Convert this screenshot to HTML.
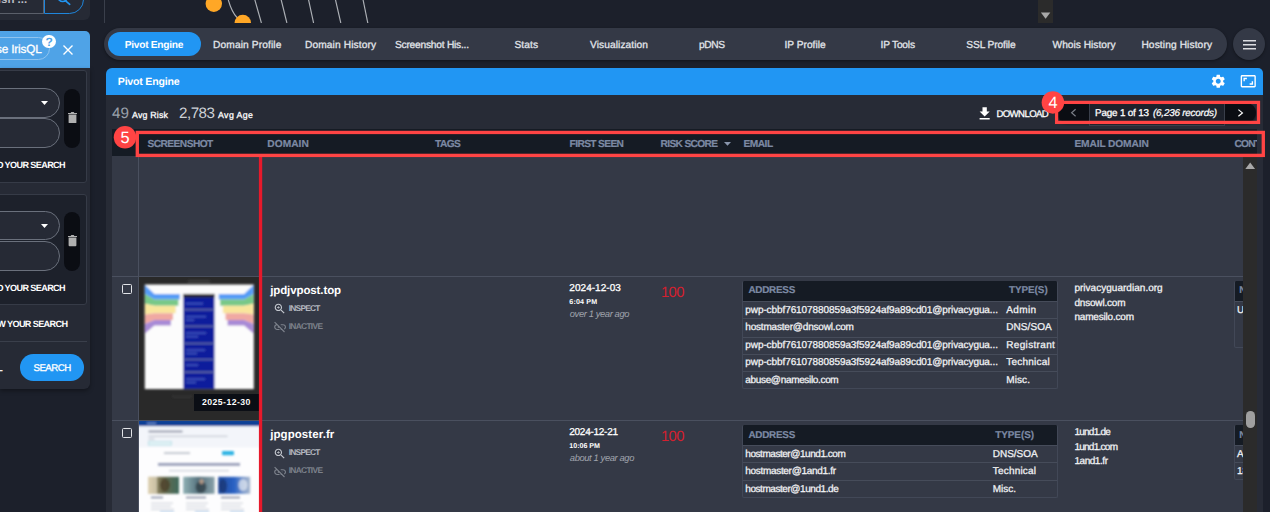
<!DOCTYPE html>
<html lang="en">
<head>
<meta charset="utf-8">
<title>Pivot Engine</title>
<style>
*{box-sizing:border-box;margin:0;padding:0}
html,body{width:1270px;height:512px;overflow:hidden;background:#1c202b}
body{position:relative;font-family:"Liberation Sans",sans-serif;text-rendering:geometricPrecision}
.a{position:absolute}
.t{position:absolute;white-space:pre;line-height:1;font-family:"Liberation Sans",sans-serif;z-index:5}
#texts{position:absolute;left:0;top:0;width:0;height:0}
.sep{position:absolute;height:1px;background:#4a505f}
.et{position:absolute;border:1px solid #424857;border-top:none;border-radius:2px;background:#343946;overflow:hidden}
.et .h{position:absolute;left:0;top:0;right:0;background:#151b24}
.et .r{position:absolute;left:0;right:0;height:1px;background:#464c5a}
</style>
</head>
<body>
<!-- ===== top-left sidebar piece ===== -->
<div class="a" style="left:0;top:0;width:89.8px;height:20px;background:#262a35;border-bottom-right-radius:6px;overflow:hidden">
  <div class="a" style="left:-10px;top:-15px;width:53.8px;height:28.6px;border:1px solid #5a5f6a"></div>
  <div class="a" style="left:44px;top:-15px;width:39.8px;height:28.8px;border:1px solid #1f86dc;border-radius:0 14.5px 14.5px 0"></div>
  <svg class="a" style="left:50px;top:0" width="30" height="10" viewBox="50 0 30 10"><circle cx="62.7" cy="-3.1" r="4.6" fill="none" stroke="#2196f3" stroke-width="1.7"/><path d="M65.9 1.2L69.7 4.3" stroke="#2196f3" stroke-width="1.7" stroke-linecap="round" fill="none"/></svg>
</div>
<div class="a" style="left:104px;top:0;width:1px;height:22.8px;background:#3a3f4b"></div>
<!-- graph remnants -->
<svg class="a" style="left:107px;top:0" width="940" height="23" viewBox="107 0 940 23">
  <g fill="none" stroke="#aeb1b7" stroke-width="1.15">
    <path d="M228 -1C230 6 232.5 13 237 17.5"/>
    <path d="M254.6 -1L261.4 23"/>
    <path d="M281 -1L286.9 23"/>
    <path d="M308.4 -1L313.6 23"/>
    <path d="M335.3 -1L340.8 23"/>
    <path d="M362.9 -1L367.8 23"/>
  </g>
  <circle cx="213.8" cy="3.8" r="8.2" fill="#ffa726"/>
  <circle cx="242.8" cy="23" r="8.3" fill="#ffa726"/>
</svg>
<div class="a" style="left:1038px;top:0;width:15px;height:22.8px;background:#2b2b2b"></div>
<svg class="a" style="left:1038px;top:0" width="15" height="23" viewBox="0 0 15 23"><path d="M2.9 12.4h9.4l-4.7 6.4z" fill="#a8a8a8"/></svg>

<!-- ===== sidebar ===== -->
<div class="a" style="left:0;top:31px;width:89.9px;height:37.2px;background:#4fa3e7;border-top-right-radius:5px"></div>
<div class="a" style="left:-20px;top:37.3px;width:70px;height:23px;border:1px solid #8fc4f0;border-radius:12px"></div>
<div class="a" style="left:41.9px;top:34.7px;width:13.8px;height:13.8px;border-radius:50%;background:#fff;z-index:4"></div>
<svg class="a" style="left:63.4px;top:44.5px" width="10" height="10" viewBox="0 0 10 10"><path d="M0.5 0.5L9.5 9.5M9.5 0.5L0.5 9.5" stroke="#fff" stroke-width="1.4" fill="none"/></svg>
<div class="a" style="left:0;top:68.1px;width:89.9px;height:321px;background:#262a35;border-bottom-right-radius:6px;box-shadow:0 2px 4px rgba(0,0,0,.35)"></div>
<div class="a" style="left:-5px;top:70px;width:92px;height:113px;background:#1d212b;border:1px solid #363b47;border-radius:3px"></div>
<div class="a" style="left:-5px;top:194px;width:92px;height:111px;background:#1d212b;border:1px solid #363b47;border-radius:3px"></div>
<!-- pills box 1 -->
<div class="a" style="left:-20px;top:88.2px;width:80.4px;height:29.4px;background:#262a35;border:1px solid #6a707c;border-radius:15px"></div>
<div class="a" style="left:-20px;top:118.2px;width:80.4px;height:29.4px;background:#262a35;border:1px solid #6a707c;border-radius:15px"></div>
<div class="a" style="left:64px;top:89px;width:16px;height:58.6px;background:#0b0d13;border-radius:8px"></div>
<svg class="a" style="left:40.8px;top:100.9px" width="7" height="4" viewBox="0 0 7 4"><path d="M0 0h7L3.5 4z" fill="#fff"/></svg>
<svg class="a" style="left:67.6px;top:111.8px" width="9" height="11.5" viewBox="0 0 9 11.5"><path d="M0.6 2.6h7.8v7.7a1 1 0 0 1-1 1H1.6a1 1 0 0 1-1-1zM0 0.9h2.6l.7-.9h2.4l.7.9H9v1.1H0z" fill="#b0b0b0"/></svg>
<!-- pills box 2 -->
<div class="a" style="left:-20px;top:211px;width:80.4px;height:29.4px;background:#262a35;border:1px solid #6a707c;border-radius:15px"></div>
<div class="a" style="left:-20px;top:241px;width:80.4px;height:29.6px;background:#262a35;border:1px solid #6a707c;border-radius:15px"></div>
<div class="a" style="left:64px;top:212px;width:16px;height:58.6px;background:#0b0d13;border-radius:8px"></div>
<svg class="a" style="left:40.8px;top:223.7px" width="7" height="4" viewBox="0 0 7 4"><path d="M0 0h7L3.5 4z" fill="#fff"/></svg>
<svg class="a" style="left:67.6px;top:235.2px" width="9" height="11.5" viewBox="0 0 9 11.5"><path d="M0.6 2.6h7.8v7.7a1 1 0 0 1-1 1H1.6a1 1 0 0 1-1-1zM0 0.9h2.6l.7-.9h2.4l.7.9H9v1.1H0z" fill="#b0b0b0"/></svg>
<div class="a" style="left:0;top:341.2px;width:86.6px;height:1px;background:#3a3f4b"></div>
<div class="a" style="left:19.8px;top:354.3px;width:64.3px;height:26.6px;background:#2196f3;border-radius:13.3px"></div>

<!-- ===== tab bar ===== -->
<div class="a" style="left:104px;top:28.2px;width:1123.2px;height:31.7px;background:#343946;border-radius:16px;box-shadow:0 1px 3px rgba(0,0,0,.4)"></div>
<div class="a" style="left:107.9px;top:32px;width:92.8px;height:24px;background:#2196f3;border-radius:12px"></div>
<div class="a" style="left:1232.7px;top:28.1px;width:32.1px;height:32.1px;background:#343946;border-radius:50%;box-shadow:0 1px 3px rgba(0,0,0,.4)"></div>
<svg class="a" style="left:1243px;top:40px" width="13.2" height="10" viewBox="0 0 13.2 10"><path d="M0 0.8h13.2M0 4.8h13.2M0 8.7h13.2" stroke="#dcdee2" stroke-width="1.5" fill="none"/></svg>

<!-- ===== main panel ===== -->
<div class="a" style="left:106px;top:67.8px;width:1157.2px;height:460px;background:#272b36;border-radius:6px 5px 0 0"></div>
<div class="a" style="left:106px;top:67.8px;width:1157.2px;height:27.2px;background:#2196f3;border-radius:6px 5px 0 0"></div>
<!-- gear -->
<svg class="a" style="left:1210.15px;top:73.1px" width="16.5" height="16.5" viewBox="0 0 24 24"><path fill="#fff" d="M19.14,12.94c0.04-0.3,0.06-0.61,0.06-0.94c0-0.32-0.02-0.64-0.07-0.94l2.03-1.58c0.18-0.14,0.23-0.41,0.12-0.61 l-1.92-3.32c-0.12-0.22-0.37-0.29-0.59-0.22l-2.39,0.96c-0.5-0.38-1.03-0.7-1.62-0.94L14.4,2.81c-0.04-0.24-0.24-0.41-0.48-0.41 h-3.84c-0.24,0-0.43,0.17-0.47,0.41L9.25,5.35C8.66,5.59,8.12,5.92,7.63,6.29L5.24,5.33c-0.22-0.08-0.47,0-0.59,0.22L2.74,8.87 C2.62,9.08,2.66,9.34,2.86,9.48l2.03,1.58C4.84,11.36,4.8,11.69,4.8,12s0.02,0.64,0.07,0.94l-2.03,1.58 c-0.18,0.14-0.23,0.41-0.12,0.61l1.92,3.32c0.12,0.22,0.37,0.29,0.59,0.22l2.39-0.96c0.5,0.38,1.03,0.7,1.62,0.94l0.36,2.54 c0.05,0.24,0.24,0.41,0.48,0.41h3.84c0.24,0,0.44-0.17,0.47-0.41l0.36-2.54c0.59-0.24,1.13-0.56,1.62-0.94l2.39,0.96 c0.22,0.08,0.47,0,0.59-0.22l1.92-3.32c0.12-0.22,0.07-0.47-0.12-0.61L19.14,12.94z M12,15.6c-1.98,0-3.6-1.62-3.6-3.6 s1.62-3.6,3.6-3.6s3.6,1.62,3.6,3.6S13.98,15.6,12,15.6z"/></svg>
<!-- aspect ratio -->
<svg class="a" style="left:1240.15px;top:73.1px" width="16.5" height="16.5" viewBox="0 0 24 24"><path fill="#fff" d="M19 12h-2v3h-3v2h5v-5zM7 9h3V7H5v5h2V9zm14-6H3c-1.1 0-2 .9-2 2v14c0 1.1.9 2 2 2h18c1.1 0 2-.9 2-2V5c0-1.1-.9-2-2-2zm0 16.01H3V4.99h18v14.02z"/></svg>
<!-- download icon -->
<svg class="a" style="left:976.4px;top:104.6px" width="17.3" height="17.3" viewBox="0 0 24 24"><path fill="#fff" d="M19 9h-4V3H9v6H5l7 7 7-7zM5 18v2h14v-2H5z"/></svg>
<!-- pagination -->
<div class="a" style="left:1057px;top:103.4px;width:199.2px;height:18.6px;background:#0b0d13;border-radius:9.3px;box-shadow:0 2px 2px rgba(0,0,0,.5)"></div>
<div class="a" style="left:1088.6px;top:103px;width:136.4px;height:22.8px;background:#1d212b;border:1px solid #3a3f4b;border-top:none"></div>
<svg class="a" style="left:1070px;top:108px" width="7" height="10" viewBox="0 0 7 10"><path d="M5.6 1.2L1.6 4.7L5.6 8.2" stroke="#7b7f88" stroke-width="1.15" fill="none"/></svg>
<svg class="a" style="left:1237px;top:108.3px" width="7" height="10" viewBox="0 0 7 10"><path d="M1.4 1.6L5.4 4.9L1.4 8.2" stroke="#fff" stroke-width="1.2" fill="none"/></svg>

<!-- ===== table ===== -->
<div class="a" style="left:112px;top:129px;width:1145px;height:27px;background:#151b24"></div>
<div class="a" style="left:112px;top:155.7px;width:1145px;height:360px;background:#343946"></div>
<div class="a" style="left:138px;top:155.7px;width:1px;height:360px;background:#4a505f"></div>
<div class="sep" style="left:112px;top:275.7px;width:1131px"></div>
<div class="sep" style="left:112px;top:419.9px;width:1131px"></div>
<svg class="a" style="left:724px;top:141.5px" width="7" height="4" viewBox="0 0 7 4"><path d="M0 0h7L3.5 3.8z" fill="#8a96ad"/></svg>
<!-- checkboxes -->
<div class="a" style="left:122px;top:284px;width:10.2px;height:10.2px;border:1.2px solid #e2e4e8;border-radius:1.5px"></div>
<div class="a" style="left:122px;top:428.2px;width:10.2px;height:10.2px;border:1.2px solid #e2e4e8;border-radius:1.5px"></div>
<!-- thumbnail 1 -->
<div class="a" style="left:139px;top:276.7px;width:120px;height:143.2px;background:#292929;overflow:hidden">
<svg class="a" style="left:0;top:0" width="120" height="144" viewBox="139 276.7 120 144">
  <defs><filter id="b1" x="-10%" y="-10%" width="120%" height="120%"><feGaussianBlur stdDeviation="1.15"/></filter>
  <filter id="b2" x="-10%" y="-10%" width="120%" height="120%"><feGaussianBlur stdDeviation="0.5"/></filter></defs>
  <g filter="url(#b1)">
    <rect x="188" y="280" width="22" height="1.6" fill="#444"/>
    <rect x="144.8" y="284.2" width="109" height="104.6" fill="#fcfcfc"/>
    <g id="wingL" filter="url(#b2)">
      <path d="M144.8 284.5L154.4 293.8H179.8V299.3H154.4L144.8 293.8z" fill="#559cf6"/>
      <path d="M144.8 293.8L154.4 299.3H178.4V305.4H154.4L144.8 303.4z" fill="#78c888"/>
      <path d="M144.8 303.4L154.4 305.4H175.7V313H154.4L144.8 314.3z" fill="#f9e69c"/>
      <path d="M144.8 314.3L154.4 313H173V319.8H154.4L144.8 323.8z" fill="#f0a9a2"/>
      <path d="M144.8 323.8L154.4 319.8H170.9V325.3H154.4L144.8 333.5z" fill="#a88ad6"/>
    </g>
    <g transform="translate(398.5 0) scale(-1 1)" filter="url(#b2)">
      <path d="M144.8 284.5L154.4 293.8H179.8V299.3H154.4L144.8 293.8z" fill="#559cf6"/>
      <path d="M144.8 293.8L154.4 299.3H178.4V305.4H154.4L144.8 303.4z" fill="#78c888"/>
      <path d="M144.8 303.4L154.4 305.4H175.7V313H154.4L144.8 314.3z" fill="#f9e69c"/>
      <path d="M144.8 314.3L154.4 313H173V319.8H154.4L144.8 323.8z" fill="#f0a9a2"/>
      <path d="M144.8 323.8L154.4 319.8H170.9V325.3H154.4L144.8 333.5z" fill="#a88ad6"/>
    </g>
    <rect x="183.3" y="293.8" width="31.2" height="95" fill="#0a1e9c"/>
    <rect x="183.3" y="293.6" width="31.2" height="3.6" fill="#2c2c34"/>
    <g fill="#5a64a2">
      <rect x="183.5" y="308.5" width="30.6" height="1.7"/><rect x="183.5" y="325.2" width="30.6" height="1.7"/>
      <rect x="183.5" y="342.3" width="30.6" height="1.7"/><rect x="183.5" y="358.4" width="30.6" height="1.7"/>
      <rect x="183.5" y="371" width="30.6" height="1.7"/>
    </g>
    <g fill="#6f82d8" opacity=".55">
      <rect x="186" y="302.4" width="17" height="1.8"/><rect x="186" y="315.6" width="20" height="1.6"/><rect x="186" y="319" width="8" height="1.6"/>
      <rect x="186" y="332" width="20" height="1.6"/><rect x="186" y="335.6" width="12" height="1.6"/>
      <rect x="186" y="349" width="19" height="1.6"/><rect x="186" y="352.4" width="11" height="1.6"/>
      <rect x="186" y="364" width="12" height="1.6"/><rect x="186" y="378" width="19" height="1.6"/><rect x="186" y="381.4" width="10" height="1.6"/>
    </g>
    <rect x="172" y="395.6" width="20" height="1.4" fill="#383838"/>
  </g>
</svg>
<div class="a" style="left:55px;top:117.3px;width:65px;height:16.8px;background:#0b0e15"></div>
</div>
<!-- thumbnail 2 -->
<div class="a" style="left:139px;top:420.9px;width:120px;height:92px;background:#fdfdfe;overflow:hidden">
<svg class="a" style="left:0;top:0" width="120" height="92" viewBox="139 420.9 120 92">
  <defs><filter id="b3" x="-10%" y="-10%" width="120%" height="120%"><feGaussianBlur stdDeviation="0.95"/></filter>
  <linearGradient id="g1" x1="0" x2="1"><stop offset="0" stop-color="#c9b48a"/><stop offset=".45" stop-color="#6b6a4c"/><stop offset="1" stop-color="#3f6a5c"/></linearGradient>
  <linearGradient id="g2" x1="0" x2="1"><stop offset="0" stop-color="#8fb0b4"/><stop offset=".5" stop-color="#54707c"/><stop offset="1" stop-color="#8aa2aa"/></linearGradient>
  <linearGradient id="g3" x1="0" x2="1"><stop offset="0" stop-color="#1f4a9c"/><stop offset=".5" stop-color="#2a62c4"/><stop offset="1" stop-color="#aebcd0"/></linearGradient></defs>
  <g filter="url(#b3)">
    <rect x="137" y="419" width="124" height="7.2" fill="#0c3f96"/>
    <rect x="137" y="426.2" width="124" height="21" fill="#f3f5fa"/>
    <rect x="147" y="422.6" width="9" height="1.4" fill="#6f94d0"/>
    <rect x="148.5" y="430.5" width="34" height="1.8" fill="#47506a" opacity=".6"/>
    <rect x="148.5" y="435.6" width="79" height="1.2" fill="#c2c8d2"/>
    <rect x="148.5" y="438.4" width="6" height="1.2" fill="#c2c8d2"/>
    <rect x="148.5" y="441.4" width="23" height="3.6" fill="#e3f3f6" stroke="#9fd4df" stroke-width=".6"/>
    <rect x="164" y="452.2" width="26" height="1.6" fill="#b9bec8"/>
    <rect x="222" y="451" width="12" height="4.2" rx="1" fill="#2fb4e4"/>
    <rect x="158" y="462.9" width="82" height="2.8" fill="#4a5584" opacity=".55"/>
    <rect x="169" y="470" width="60" height="1.2" fill="#c9cdd6"/>
    <rect x="148" y="476.7" width="31" height="17" fill="url(#g1)"/><ellipse cx="165" cy="485" rx="5" ry="6.5" fill="#4a3c26" opacity=".7"/><rect x="148" y="476.7" width="9" height="17" fill="#efe6cf" opacity=".6"/>
    <rect x="183.2" y="476.7" width="31.4" height="17" fill="url(#g2)"/><ellipse cx="201" cy="487" rx="5.5" ry="6" fill="#2e3a42" opacity=".7"/><ellipse cx="201.5" cy="481.5" rx="2.2" ry="2.6" fill="#c9a58c" opacity=".8"/>
    <rect x="218.2" y="476.7" width="32" height="17" fill="url(#g3)"/><ellipse cx="223" cy="486" rx="4" ry="7" fill="#1b2f66" opacity=".6"/><ellipse cx="243" cy="485" rx="4.5" ry="6" fill="#e8ecf2" opacity=".7"/>
    <g fill="#8a92a6"><rect x="151" y="496.6" width="12" height="1.6"/><rect x="186" y="496.6" width="20" height="1.6"/><rect x="221" y="496.6" width="19" height="1.6"/></g>
    <g fill="#cfd3da"><rect x="151" y="502.5" width="22" height="1.1"/><rect x="186" y="502.5" width="22" height="1.1"/><rect x="221" y="502.5" width="22" height="1.1"/>
    <rect x="151" y="505.6" width="20" height="1.1"/><rect x="186" y="505.6" width="20" height="1.1"/><rect x="221" y="505.6" width="20" height="1.1"/>
    <rect x="151" y="508.7" width="23" height="1.1"/><rect x="186" y="508.7" width="23" height="1.1"/><rect x="221" y="508.7" width="23" height="1.1"/></g>
    <g fill="#7fb0e0" opacity=".7"><rect x="160" y="511" width="14" height="1.2"/><rect x="195" y="511" width="14" height="1.2"/><rect x="230" y="511" width="14" height="1.2"/></g>
  </g>
</svg>
</div>

<!-- row icons: zoom_in & link_off -->
<svg class="a" style="left:272.9px;top:302.2px" width="13.6" height="13.6" viewBox="0 0 24 24"><path fill="#c3c7ce" d="M15.5 14h-.79l-.28-.27C15.41 12.59 16 11.11 16 9.5 16 5.91 13.09 3 9.5 3S3 5.91 3 9.5 5.91 16 9.5 16c1.61 0 3.09-.59 4.23-1.57l.27.28v.79l5 4.99L20.49 19l-4.99-5zm-6 0C7.01 14 5 11.99 5 9.500S7.01 5 9.5 5 14 7.01 14 9.5 11.99 14 9.500 14zM12 10h-2v2H9v-2H7V9h2V7h1v2h2v1z"/></svg>
<svg class="a" style="left:272.9px;top:446.5px" width="13.6" height="13.6" viewBox="0 0 24 24"><path fill="#c3c7ce" d="M15.5 14h-.79l-.28-.27C15.41 12.59 16 11.11 16 9.5 16 5.91 13.09 3 9.5 3S3 5.91 3 9.5 5.91 16 9.5 16c1.61 0 3.09-.59 4.23-1.57l.27.28v.79l5 4.99L20.49 19l-4.99-5zm-6 0C7.01 14 5 11.99 5 9.500S7.01 5 9.5 5 14 7.01 14 9.5 11.99 14 9.500 14zM12 10h-2v2H9v-2H7V9h2V7h1v2h2v1z"/></svg>
<svg class="a" style="left:272.6px;top:320.2px" width="14.2" height="14.2" viewBox="0 0 24 24"><path fill="#7d828c" d="M14.39 11L16 12.610V11zM17 7h-4v1.900h4c1.710 0 3.100 1.390 3.100 3.100 0 1.270-.77 2.370-1.870 2.840l1.400 1.400C21.050 15.360 22 13.790 22 12c0-2.760-2.240-5-5-5zM2 4.270l3.110 3.110C3.290 8.120 2 9.910 2 12c0 2.760 2.240 5 5 5h4v-1.900H7c-1.710 0-3.100-1.390-3.100-3.100 0-1.590 1.210-2.900 2.760-3.070L8.730 11H8v2h2.730L13 15.270V17h1.730l4.010 4.010 1.410-1.410L3.410 2.860 2 4.270z"/></svg>
<svg class="a" style="left:272.6px;top:464.5px" width="14.2" height="14.2" viewBox="0 0 24 24"><path fill="#7d828c" d="M14.39 11L16 12.610V11zM17 7h-4v1.900h4c1.710 0 3.100 1.390 3.100 3.100 0 1.270-.77 2.370-1.870 2.840l1.400 1.400C21.050 15.360 22 13.790 22 12c0-2.760-2.240-5-5-5zM2 4.270l3.110 3.110C3.290 8.120 2 9.910 2 12c0 2.760 2.240 5 5 5h4v-1.900H7c-1.710 0-3.100-1.390-3.100-3.100 0-1.590 1.210-2.900 2.760-3.070L8.730 11H8v2h2.730L13 15.270V17h1.730l4.010 4.010 1.410-1.410L3.410 2.860 2 4.270z"/></svg>

<!-- email tables -->
<div class="et" style="left:742.3px;top:281px;width:316.2px;height:108.3px"><div class="h" style="height:19.7px"></div>
 <div class="r" style="top:19.7px"></div><div class="r" style="top:37.2px"></div><div class="r" style="top:55.5px"></div><div class="r" style="top:72.8px"></div><div class="r" style="top:90px"></div></div>
<div class="et" style="left:742.3px;top:425px;width:316.2px;height:72.5px"><div class="h" style="height:19.7px"></div>
 <div class="r" style="top:19.7px"></div><div class="r" style="top:37.2px"></div><div class="r" style="top:55px"></div></div>
<div class="et" style="left:1233.5px;top:281px;width:60px;height:67.3px"><div class="h" style="height:19.7px"></div><div class="r" style="top:19.7px"></div></div>
<div class="et" style="left:1233.5px;top:425px;width:60px;height:55.4px"><div class="h" style="height:19.7px"></div><div class="r" style="top:19.7px"></div><div class="r" style="top:37.2px"></div></div>

<div id="texts">
<span class="t" style="top:41px;font-size:10.2px;color:#fff;font-weight:700;left:124.70px;letter-spacing:-0.264px;">Pivot Engine</span>
<span class="t" style="top:41px;font-size:10.2px;color:#e3e6eb;-webkit-text-stroke:0.28px;left:213.00px;letter-spacing:0.122px;">Domain Profile</span>
<span class="t" style="top:41px;font-size:10.2px;color:#e3e6eb;-webkit-text-stroke:0.28px;left:305.00px;letter-spacing:0.105px;">Domain History</span>
<span class="t" style="top:41px;font-size:10.2px;color:#e3e6eb;-webkit-text-stroke:0.28px;left:395.00px;letter-spacing:-0.224px;">Screenshot His...</span>
<span class="t" style="top:41px;font-size:10.2px;color:#e3e6eb;-webkit-text-stroke:0.28px;left:514.50px;letter-spacing:0.070px;">Stats</span>
<span class="t" style="top:41px;font-size:10.2px;color:#e3e6eb;-webkit-text-stroke:0.28px;left:590.00px;letter-spacing:0.082px;">Visualization</span>
<span class="t" style="top:41px;font-size:10.2px;color:#e3e6eb;-webkit-text-stroke:0.28px;left:699.00px;letter-spacing:-0.396px;">pDNS</span>
<span class="t" style="top:41px;font-size:10.2px;color:#e3e6eb;-webkit-text-stroke:0.28px;left:784.40px;letter-spacing:0.016px;">IP Profile</span>
<span class="t" style="top:41px;font-size:10.2px;color:#e3e6eb;-webkit-text-stroke:0.28px;left:880.50px;letter-spacing:-0.196px;">IP Tools</span>
<span class="t" style="top:41px;font-size:10.2px;color:#e3e6eb;-webkit-text-stroke:0.28px;left:966.30px;letter-spacing:-0.129px;">SSL Profile</span>
<span class="t" style="top:41px;font-size:10.2px;color:#e3e6eb;-webkit-text-stroke:0.28px;left:1052.50px;letter-spacing:0.013px;">Whois History</span>
<span class="t" style="top:41px;font-size:10.2px;color:#e3e6eb;-webkit-text-stroke:0.28px;left:1141.40px;letter-spacing:0.109px;">Hosting History</span>
<span class="t" style="top:77px;font-size:10.6px;color:#fff;font-weight:700;left:117.80px;letter-spacing:-0.216px;">Pivot Engine</span>
<span class="t" style="top:106px;font-size:15.2px;color:#9aa0aa;left:112.00px;letter-spacing:0.094px;">49</span>
<span class="t" style="top:111px;font-size:8.8px;color:#fff;-webkit-text-stroke:0.28px;left:132.00px;letter-spacing:0.205px;">Avg Risk</span>
<span class="t" style="top:106px;font-size:15.2px;color:#cdd1d7;left:179.00px;letter-spacing:-0.504px;">2,783</span>
<span class="t" style="top:111px;font-size:8.8px;color:#fff;-webkit-text-stroke:0.28px;left:218.00px;letter-spacing:0.396px;">Avg Age</span>
<span class="t" style="top:110px;font-size:9.6px;color:#fff;-webkit-text-stroke:0.28px;left:996.40px;letter-spacing:-0.586px;">DOWNLOAD</span>
<span class="t" style="top:109px;font-size:9.9px;color:#fff;-webkit-text-stroke:0.28px;left:1095.00px;letter-spacing:-0.183px;">Page 1 of 13</span>
<span class="t" style="top:109px;font-size:9.9px;color:#fff;font-style:italic;-webkit-text-stroke:0.22px;left:1153.00px;letter-spacing:-0.212px;">(6,236 records)</span>
<span class="t" style="top:140px;font-size:10.2px;color:#7c89a3;font-weight:700;-webkit-text-stroke:0.2px;left:147.50px;letter-spacing:-0.552px;">SCREENSHOT</span>
<span class="t" style="top:140px;font-size:10.2px;color:#7c89a3;font-weight:700;-webkit-text-stroke:0.2px;left:267.30px;letter-spacing:0.037px;">DOMAIN</span>
<span class="t" style="top:140px;font-size:10.2px;color:#7c89a3;font-weight:700;-webkit-text-stroke:0.2px;left:435.00px;letter-spacing:-0.582px;">TAGS</span>
<span class="t" style="top:140px;font-size:10.2px;color:#7c89a3;font-weight:700;-webkit-text-stroke:0.2px;left:569.60px;letter-spacing:-0.624px;">FIRST SEEN</span>
<span class="t" style="top:140px;font-size:10.2px;color:#7c89a3;font-weight:700;-webkit-text-stroke:0.2px;left:660.50px;letter-spacing:-0.656px;">RISK SCORE</span>
<span class="t" style="top:140px;font-size:10.2px;color:#7c89a3;font-weight:700;-webkit-text-stroke:0.2px;left:743.40px;letter-spacing:-0.476px;">EMAIL</span>
<span class="t" style="top:140px;font-size:10.2px;color:#7c89a3;font-weight:700;-webkit-text-stroke:0.2px;left:1074.40px;letter-spacing:-0.114px;">EMAIL DOMAIN</span>
<span class="t" style="top:140px;font-size:10.2px;color:#7c89a3;font-weight:700;-webkit-text-stroke:0.2px;left:1234.50px;letter-spacing:-0.750px;">CONTACT</span>
<span class="t" style="top:286px;font-size:11.5px;color:#fff;font-weight:700;left:270.20px;letter-spacing:-0.107px;">jpdjvpost.top</span>
<span class="t" style="top:304px;font-size:8.4px;color:#b4b8c0;font-weight:700;left:288.70px;letter-spacing:-0.750px;">INSPECT</span>
<span class="t" style="top:322px;font-size:8.4px;color:#7d828c;font-weight:700;left:288.70px;letter-spacing:-0.685px;">INACTIVE</span>
<span class="t" style="top:284px;font-size:10.0px;color:#fff;-webkit-text-stroke:0.28px;left:569.30px;letter-spacing:0.049px;">2024-12-03</span>
<span class="t" style="top:299px;font-size:7.1px;color:#fff;font-weight:700;left:569.30px;letter-spacing:0.165px;">6:04 PM</span>
<span class="t" style="top:309px;font-size:9.4px;color:#a0a4ad;font-style:italic;left:569.80px;letter-spacing:-0.390px;">over 1 year ago</span>
<span class="t" style="top:286px;font-size:14.8px;color:#d4202f;left:661.00px;letter-spacing:-0.652px;">100</span>
<span class="t" style="top:286px;font-size:9.9px;color:#7c89a3;font-weight:700;-webkit-text-stroke:0.2px;left:748.40px;letter-spacing:-0.233px;">ADDRESS</span>
<span class="t" style="top:286px;font-size:9.9px;color:#7c89a3;font-weight:700;-webkit-text-stroke:0.2px;left:1239.30px;">N</span>
<span class="t" style="top:430px;font-size:11.5px;color:#fff;font-weight:700;left:270.20px;letter-spacing:0.076px;">jpgposter.fr</span>
<span class="t" style="top:448px;font-size:8.4px;color:#b4b8c0;font-weight:700;left:288.70px;letter-spacing:-0.750px;">INSPECT</span>
<span class="t" style="top:466px;font-size:8.4px;color:#7d828c;font-weight:700;left:288.70px;letter-spacing:-0.685px;">INACTIVE</span>
<span class="t" style="top:428px;font-size:10.0px;color:#fff;-webkit-text-stroke:0.28px;left:569.30px;letter-spacing:-0.273px;">2024-12-21</span>
<span class="t" style="top:443px;font-size:7.1px;color:#fff;font-weight:700;left:569.30px;letter-spacing:-0.009px;">10:06 PM</span>
<span class="t" style="top:453px;font-size:9.4px;color:#a0a4ad;font-style:italic;left:569.80px;letter-spacing:-0.385px;">about 1 year ago</span>
<span class="t" style="top:430px;font-size:14.8px;color:#d4202f;left:661.00px;letter-spacing:-0.652px;">100</span>
<span class="t" style="top:431px;font-size:9.9px;color:#7c89a3;font-weight:700;-webkit-text-stroke:0.2px;left:748.40px;letter-spacing:-0.233px;">ADDRESS</span>
<span class="t" style="top:431px;font-size:9.9px;color:#7c89a3;font-weight:700;-webkit-text-stroke:0.2px;left:1239.30px;">N</span>
<span class="t" style="top:286px;font-size:9.9px;color:#7c89a3;font-weight:700;-webkit-text-stroke:0.2px;left:1009.00px;letter-spacing:-0.045px;">TYPE(S)</span>
<span class="t" style="top:431px;font-size:9.9px;color:#7c89a3;font-weight:700;-webkit-text-stroke:0.2px;left:995.30px;letter-spacing:-0.045px;">TYPE(S)</span>
<span class="t" style="top:306px;font-size:10.0px;color:#f1f2f4;-webkit-text-stroke:0.28px;left:745.30px;letter-spacing:-0.088px;">pwp-cbbf76107880859a3f5924af9a89cd01@privacygua...</span>
<span class="t" style="top:306px;font-size:10.0px;color:#f1f2f4;-webkit-text-stroke:0.28px;left:1006.30px;letter-spacing:0.385px;">Admin</span>
<span class="t" style="top:323px;font-size:10.0px;color:#f1f2f4;-webkit-text-stroke:0.28px;left:745.30px;letter-spacing:-0.191px;">hostmaster@dnsowl.com</span>
<span class="t" style="top:323px;font-size:10.0px;color:#f1f2f4;-webkit-text-stroke:0.28px;left:1006.30px;letter-spacing:0.064px;">DNS/SOA</span>
<span class="t" style="top:341px;font-size:10.0px;color:#f1f2f4;-webkit-text-stroke:0.28px;left:745.30px;letter-spacing:-0.088px;">pwp-cbbf76107880859a3f5924af9a89cd01@privacygua...</span>
<span class="t" style="top:341px;font-size:10.0px;color:#f1f2f4;-webkit-text-stroke:0.28px;left:1006.30px;letter-spacing:0.325px;">Registrant</span>
<span class="t" style="top:358px;font-size:10.0px;color:#f1f2f4;-webkit-text-stroke:0.28px;left:745.30px;letter-spacing:-0.088px;">pwp-cbbf76107880859a3f5924af9a89cd01@privacygua...</span>
<span class="t" style="top:358px;font-size:10.0px;color:#f1f2f4;-webkit-text-stroke:0.28px;left:1006.30px;letter-spacing:0.212px;">Technical</span>
<span class="t" style="top:376px;font-size:10.0px;color:#f1f2f4;-webkit-text-stroke:0.28px;left:745.30px;letter-spacing:-0.335px;">abuse@namesilo.com</span>
<span class="t" style="top:376px;font-size:10.0px;color:#f1f2f4;-webkit-text-stroke:0.28px;left:1006.30px;letter-spacing:0.089px;">Misc.</span>
<span class="t" style="top:450px;font-size:10.0px;color:#f1f2f4;-webkit-text-stroke:0.28px;left:745.30px;letter-spacing:-0.452px;">hostmaster@1und1.com</span>
<span class="t" style="top:450px;font-size:10.0px;color:#f1f2f4;-webkit-text-stroke:0.28px;left:992.80px;letter-spacing:-0.019px;">DNS/SOA</span>
<span class="t" style="top:467px;font-size:10.0px;color:#f1f2f4;-webkit-text-stroke:0.28px;left:745.30px;letter-spacing:-0.312px;">hostmaster@1and1.fr</span>
<span class="t" style="top:467px;font-size:10.0px;color:#f1f2f4;-webkit-text-stroke:0.28px;left:992.80px;letter-spacing:0.187px;">Technical</span>
<span class="t" style="top:485px;font-size:10.0px;color:#f1f2f4;-webkit-text-stroke:0.28px;left:745.30px;letter-spacing:-0.440px;">hostmaster@1und1.de</span>
<span class="t" style="top:485px;font-size:10.0px;color:#f1f2f4;-webkit-text-stroke:0.28px;left:992.80px;letter-spacing:-0.036px;">Misc.</span>
<span class="t" style="top:284px;font-size:10.0px;color:#f1f2f4;-webkit-text-stroke:0.28px;left:1074.40px;letter-spacing:0.026px;">privacyguardian.org</span>
<span class="t" style="top:299px;font-size:10.0px;color:#f1f2f4;-webkit-text-stroke:0.28px;left:1074.40px;letter-spacing:-0.179px;">dnsowl.com</span>
<span class="t" style="top:313px;font-size:10.0px;color:#f1f2f4;-webkit-text-stroke:0.28px;left:1074.40px;letter-spacing:-0.191px;">namesilo.com</span>
<span class="t" style="top:428px;font-size:10.0px;color:#f1f2f4;-webkit-text-stroke:0.28px;left:1074.40px;letter-spacing:-0.750px;">1und1.de</span>
<span class="t" style="top:443px;font-size:10.0px;color:#f1f2f4;-webkit-text-stroke:0.28px;left:1074.40px;letter-spacing:-0.736px;">1und1.com</span>
<span class="t" style="top:457px;font-size:10.0px;color:#f1f2f4;-webkit-text-stroke:0.28px;left:1074.40px;letter-spacing:-0.443px;">1and1.fr</span>
<span class="t" style="top:306px;font-size:10.0px;color:#f1f2f4;-webkit-text-stroke:0.28px;left:1237.00px;">URL</span>
<span class="t" style="top:450px;font-size:10.0px;color:#f1f2f4;-webkit-text-stroke:0.28px;left:1237.00px;">AS</span>
<span class="t" style="top:467px;font-size:10.0px;color:#f1f2f4;-webkit-text-stroke:0.28px;left:1237.00px;">18</span>
<span class="t" style="top:398px;font-size:8.7px;color:#fff;font-weight:700;left:202.10px;letter-spacing:0.416px;">2025-12-30</span>
<span class="t" style="top:-5px;font-size:11.5px;color:#b9bdc4;font-weight:700;left:-27.11px;">English ...</span>
<span class="t" style="top:44px;font-size:11.8px;color:#fff;-webkit-text-stroke:0.3px;left:-12.22px;letter-spacing:-0.200px;">Use IrisQL</span>
<span class="t" style="top:36px;font-size:12px;color:#4fa3e7;font-weight:700;left:45.60px;">?</span>
<span class="t" style="top:161px;font-size:9.1px;color:#fff;font-weight:700;left:-30.66px;letter-spacing:-0.620px;">EXPAND YOUR SEARCH</span>
<span class="t" style="top:284px;font-size:9.1px;color:#fff;font-weight:700;left:-30.66px;letter-spacing:-0.620px;">EXPAND YOUR SEARCH</span>
<span class="t" style="top:320px;font-size:9.1px;color:#fff;font-weight:700;left:-32.96px;letter-spacing:-0.620px;">NARROW YOUR SEARCH</span>
<span class="t" style="top:364px;font-size:9.7px;color:#fff;-webkit-text-stroke:0.28px;left:33.50px;letter-spacing:-0.535px;">SEARCH</span>
<span class="t" style="top:364px;font-size:9.7px;color:#fff;-webkit-text-stroke:0.28px;left:-36.71px;">CANCEL</span>
<span class="t" style="top:130px;font-size:16.4px;color:#fff;left:120.60px;z-index:10;">5</span>
<span class="t" style="top:95px;font-size:16.4px;color:#fff;left:1048.60px;z-index:10;">4</span>
</div>

<!-- scrollbar (above texts) -->
<div class="a" style="left:1243px;top:155.7px;width:13.8px;height:360px;background:#2b2b2b;z-index:6"></div>
<div class="a" style="left:1257px;top:129px;width:6.2px;height:390px;background:#272b36;z-index:6"></div>
<div class="a" style="left:1263.2px;top:95px;width:7px;height:420px;background:#1c202b;z-index:6"></div>
<svg class="a" style="left:1243px;top:155.7px;z-index:7" width="14" height="16" viewBox="0 0 14 16"><path d="M7.2 6.4l4.9 6.6H2.3z" fill="#a8a8a8"/></svg>
<div class="a" style="left:1246px;top:410.8px;width:8.8px;height:17.3px;border-radius:4.4px;background:#9f9f9f;z-index:7"></div>

<!-- ===== red annotations ===== -->
<svg class="a" style="left:0;top:0;z-index:8" width="1270" height="512" viewBox="0 0 1270 512">
  <rect x="258.9" y="156" width="3.3" height="360" fill="#e6192b"/>
  <rect x="137.3" y="132.45" width="1126" height="22.95" fill="none" stroke="#ff4444" stroke-width="3.35"/>
  <rect x="1056.6" y="102.4" width="201.9" height="20" fill="none" stroke="#ff4444" stroke-width="3.25"/>
  <circle cx="125" cy="137.2" r="11.25" fill="#ff4444"/>
  <circle cx="1052.9" cy="102.4" r="11.25" fill="#ff4444"/>
</svg>
</body>
</html>
